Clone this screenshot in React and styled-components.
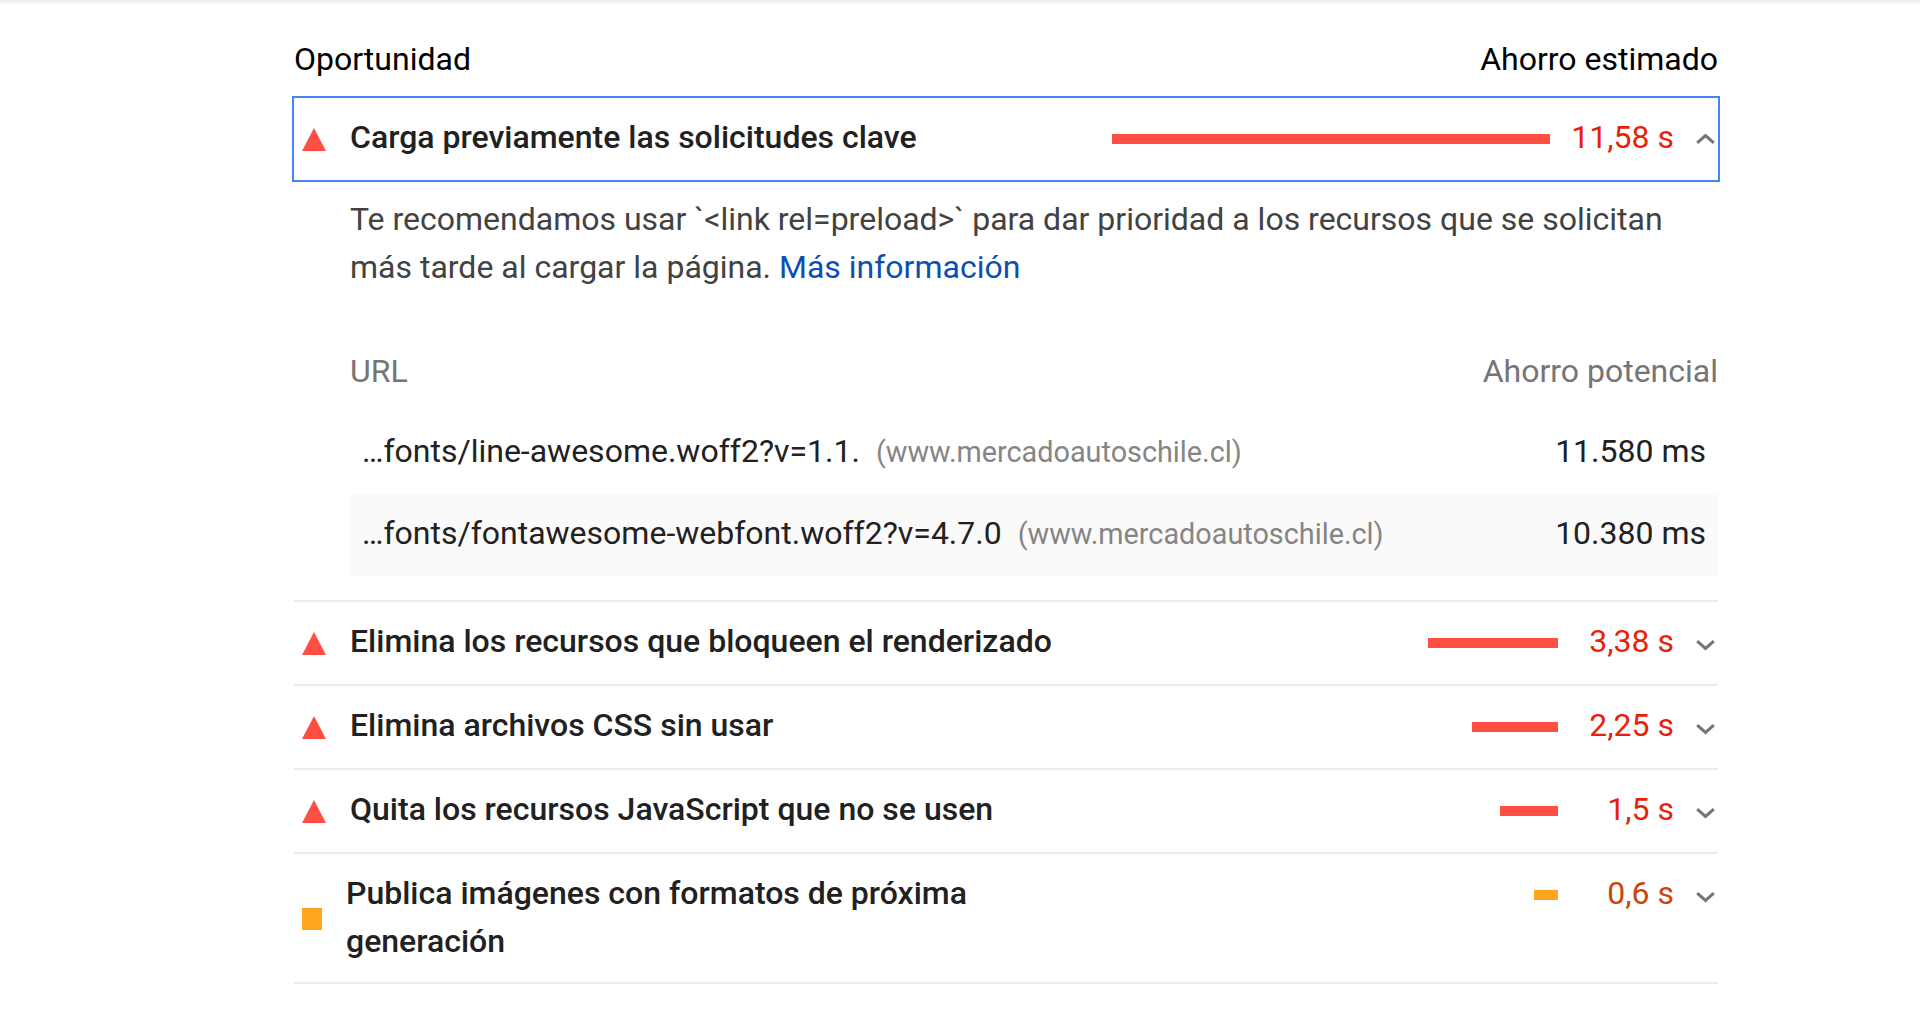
import React from 'react';
import styled, { createGlobalStyle } from 'styled-components';

const GlobalStyle = createGlobalStyle`
    html, body {
        margin: 0;
        padding: 0;
        background: #fff;
        overflow: hidden;
    }
    body {
        font-family: Roboto, "Liberation Sans", sans-serif;
    }
`
const TopShadow = styled.div`
    height: 5px;
    background: linear-gradient(#ececec, #fff);
`
const Page = styled.div`
    width: 1424px;
    margin-left: 294px;
`
const HeaderRow = styled.div`
    display: flex;
    justify-content: space-between;
    height: 91px;
    padding-top: 30px;
    box-sizing: border-box;
    font-size: 32px;
    line-height: 48px;
    color: #000;
`
const Audit = styled.div`
    border-bottom: ${props => props.$open ? '0' : '2px solid #ebebeb'};
    border-top: ${props => props.$first ? '2px solid #ebebeb' : '0'};
`
const Summary = styled.div`
    display: flex;
    align-items: center;
    box-sizing: border-box;
    min-height: 82px;
    padding: ${props => props.$wrapped ? '17px 0 15px' : '0'};
    ${props => props.$open && `
        min-height: 86px;
        margin: 0 -2px;
        border: 2px solid #4285f4;
    `}
`
const Triangle = styled.svg`
    flex: none;
    width: 24px;
    height: 23px;
    margin: 0 24px 0 8px;
`
const Square = styled.div`
    flex: none;
    width: 20px;
    height: 22px;
    margin: 0 24px 0 8px;
    background: #ffa51e;
`
const Title = styled.div`
    flex: 1;
    margin: -2px 0 2px;
    font-size: 32px;
    font-weight: 500;
    line-height: 48px;
    color: #212121;
`
const TitleText = styled.div`
    max-width: ${props => props.$narrow ? '680px' : 'none'};
`
const Trail = styled.div`
    flex: none;
    display: flex;
    align-items: center;
    align-self: ${props => props.$wrapped ? 'flex-start' : 'center'};
    height: 48px;
`
const Bar = styled.div`
    flex: none;
    width: ${props => props.$width}px;
    height: 10px;
    background: ${props => props.$level === 'fail' ? '#ff4e42' : '#ffa51e'};
`
const Value = styled.div`
    flex: none;
    min-width: 95px;
    margin: -2px 0 2px 21px;
    font-size: 32px;
    line-height: 48px;
    text-align: right;
    white-space: nowrap;
    color: ${props => props.$level === 'fail' ? '#ea1f0a' : '#cc4408'};
`
const ChevronIcon = styled.svg`
    flex: none;
    width: 19px;
    height: 11px;
    margin: ${props => props.$up ? '0' : '4px'} 3px 0 22px;
`
const Details = styled.div`
    padding: 13px 0 24px 56px;
`
const Description = styled.div`
    font-size: 32px;
    line-height: 48px;
    color: #424242;
`
const MoreLink = styled.a`
    color: #0b4fb3;
    text-decoration: none;
`
const TableHead = styled.div`
    display: flex;
    justify-content: space-between;
    margin-top: 56px;
    height: 65px;
    font-size: 32px;
    line-height: 48px;
    color: #757575;
`
const UrlRow = styled.div`
    display: flex;
    align-items: center;
    justify-content: space-between;
    box-sizing: border-box;
    height: 82px;
    padding: 0 12px 4px;
    font-size: 32px;
    background: ${props => props.$zebra ? '#fafafa' : 'transparent'};
    color: #212121;
`
const Host = styled.span`
    margin-left: 16px;
    font-size: 28.8px;
    color: #858585;
`

function Chevron({ up }) {
    return (
        <ChevronIcon $up={up} viewBox="0 0 19 11">
            <polyline
                points={up ? '1.2,8.8 9.5,1.5 17.8,8.8' : '1.2,1.2 9.5,8.5 17.8,1.2'}
                fill="none"
                stroke="#757575"
                strokeWidth="3"
            />
        </ChevronIcon>
    )
}

function Marker({ level }) {
    if (level === 'fail') {
        return (
            <Triangle viewBox="0 0 24 23">
                <polygon points="12,0 24,23 0,23" fill="#ff4e42" />
            </Triangle>
        )
    }
    return <Square />
}

const audits = [
    { title: 'Elimina los recursos que bloqueen el renderizado', value: '3,38 s', bar: 130, level: 'fail' },
    { title: 'Elimina archivos CSS sin usar', value: '2,25 s', bar: 86, level: 'fail' },
    { title: 'Quita los recursos JavaScript que no se usen', value: '1,5 s', bar: 58, level: 'fail' },
    { title: 'Publica imágenes con formatos de próxima generación', value: '0,6 s', bar: 24, level: 'average', wrapped: true },
]

export default function App() {
    return (
        <>
            <GlobalStyle />
            <TopShadow />
            <Page>
                <HeaderRow>
                    <div>Oportunidad</div>
                    <div>Ahorro estimado</div>
                </HeaderRow>
                <Audit $open>
                    <Summary $open>
                        <Marker level="fail" />
                        <Title>Carga previamente las solicitudes clave</Title>
                        <Trail>
                            <Bar $width={438} $level="fail" />
                            <Value $level="fail">11,58 s</Value>
                            <Chevron up />
                        </Trail>
                    </Summary>
                    <Details>
                        <Description>
                            Te recomendamos usar `&lt;link rel=preload&gt;` para dar prioridad a los recursos que se solicitan más tarde al cargar la página. <MoreLink href="#">Más información</MoreLink>
                        </Description>
                        <TableHead>
                            <div>URL</div>
                            <div>Ahorro potencial</div>
                        </TableHead>
                        <UrlRow>
                            <div>…fonts/line-awesome.woff2?v=1.1.<Host>(www.mercadoautoschile.cl)</Host></div>
                            <div>11.580 ms</div>
                        </UrlRow>
                        <UrlRow $zebra>
                            <div>…fonts/fontawesome-webfont.woff2?v=4.7.0<Host>(www.mercadoautoschile.cl)</Host></div>
                            <div>10.380 ms</div>
                        </UrlRow>
                    </Details>
                </Audit>
                {audits.map((audit, i) => (
                    <Audit key={i} $first={i === 0}>
                        <Summary $wrapped={audit.wrapped}>
                            <Marker level={audit.level} />
                            <Title><TitleText $narrow={audit.wrapped}>{audit.title}</TitleText></Title>
                            <Trail $wrapped={audit.wrapped}>
                                <Bar $width={audit.bar} $level={audit.level} />
                                <Value $level={audit.level}>{audit.value}</Value>
                                <Chevron />
                            </Trail>
                        </Summary>
                    </Audit>
                ))}
            </Page>
        </>
    )
}
